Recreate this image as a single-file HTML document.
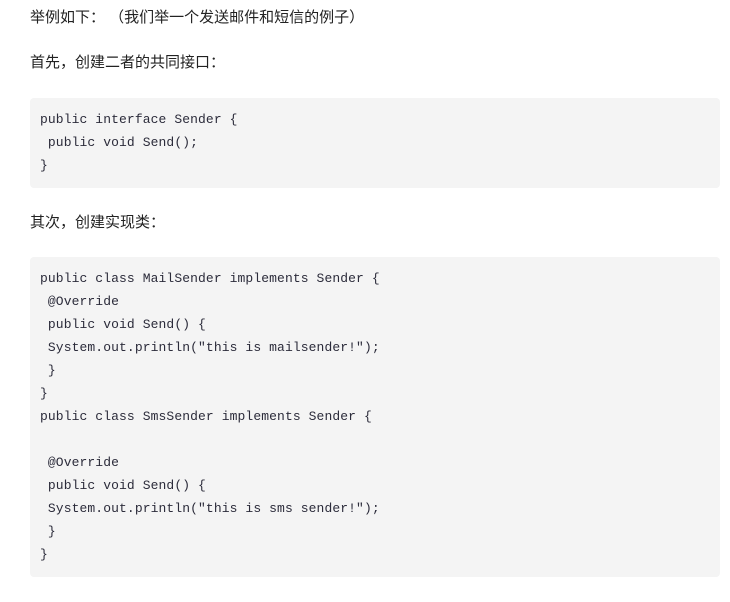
<!DOCTYPE html>
<html><head><meta charset="utf-8"><style>
body{margin:0;background:#fff;width:730px;height:602px;overflow:hidden;font-family:"Liberation Sans","Noto Sans CJK SC",sans-serif;color:#222;}
.t{position:absolute;left:30px;font-size:15px;line-height:22px;}
.c{position:absolute;left:30px;width:690px;background:#f4f4f4;border-radius:4px;box-sizing:border-box;padding:10px 10px;font-family:"Liberation Mono",monospace;font-size:13px;letter-spacing:0.1px;line-height:23px;color:#2b2b3a;white-space:pre;}
</style></head><body>
<div class="t" style="top:7px">举例如下：&nbsp;（我们举一个发送邮件和短信的例子）</div>
<div class="t" style="top:52px">首先，创建二者的共同接口：</div>
<div class="c" style="top:98px;height:90px">public interface Sender {
 public void Send();
}</div>
<div class="t" style="top:212px">其次，创建实现类：</div>
<div class="c" style="top:257px;height:320px">public class MailSender implements Sender {
 @Override
 public void Send() {
 System.out.println("this is mailsender!");
 }
}
public class SmsSender implements Sender {

 @Override
 public void Send() {
 System.out.println("this is sms sender!");
 }
}</div>
</body></html>
